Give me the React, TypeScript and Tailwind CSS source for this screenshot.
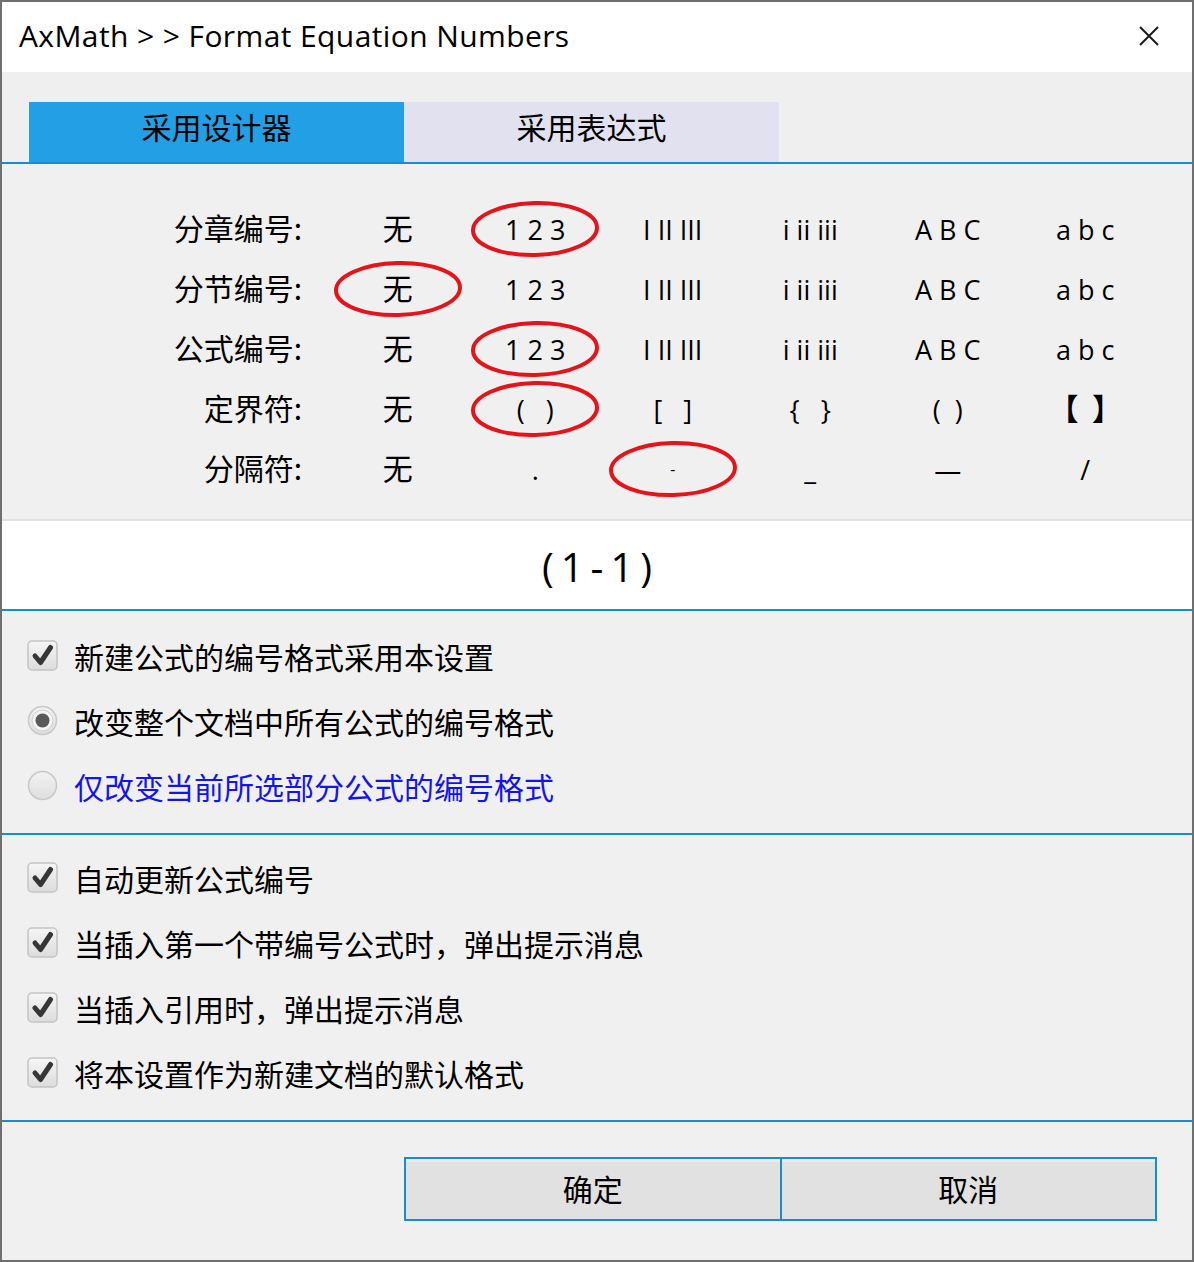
import React from "react";

const latin = "font-['Open_Sans','Noto_Sans_CJK_SC',sans-serif]";
const cjk = "font-['Noto_Sans_CJK_SC','Open_Sans',sans-serif]";

interface Row {
  label: string;
  items: string[];
  sel: number;
}

const rows: Row[] = [
  { label: "分章编号:", items: ["无", "1 2 3", "I II III", "i ii iii", "A B C", "a b c"], sel: 1 },
  { label: "分节编号:", items: ["无", "1 2 3", "I II III", "i ii iii", "A B C", "a b c"], sel: 0 },
  { label: "公式编号:", items: ["无", "1 2 3", "I II III", "i ii iii", "A B C", "a b c"], sel: 1 },
  { label: "定界符:", items: ["无", "(\u00a0\u00a0\u00a0)", "[\u00a0\u00a0\u00a0]", "{\u00a0\u00a0\u00a0}", "(\u00a0\u00a0)", "【\u00a0\u00a0】"], sel: 1 },
  { label: "分隔符:", items: ["无", ".", "-", "_", "—", "/"], sel: 2 },
];

function RedCircle() {
  return (
    <svg
      className="absolute left-1/2 top-1/2 -translate-x-1/2 -translate-y-1/2 pointer-events-none"
      width="134"
      height="60"
      viewBox="0 0 134 60"
    >
      <ellipse
        cx="67"
        cy="30"
        rx="62"
        ry="26"
        fill="none"
        stroke="#e5141b"
        strokeWidth="4"
        transform="rotate(-1.5 67 30)"
      />
    </svg>
  );
}

function Cell({ text, selected }: { text: string; selected: boolean }) {
  const isBracket = text.startsWith("【");
  const isCjk = text === "无" || isBracket;
  const small = text === "-";
  return (
    <div className="relative flex h-[60px] items-center justify-center">
      <span
        className={`${isCjk ? cjk + " pb-[4px] text-[30px]" : latin + (small ? " text-[16px]" : " text-[27px]")} ${isBracket ? "font-bold" : ""} whitespace-pre text-black leading-none`}
      >
        {text}
      </span>
      {selected && <RedCircle />}
    </div>
  );
}

function CheckBox() {
  return (
    <svg width="31" height="31" viewBox="0 0 31 31" className="shrink-0">
      <defs>
        <linearGradient id="cbg" x1="0" y1="0" x2="0" y2="1">
          <stop offset="0" stopColor="#f6f6f6" />
          <stop offset="1" stopColor="#dcdcdc" />
        </linearGradient>
      </defs>
      <rect x="1" y="1" width="29" height="29" rx="4" fill="url(#cbg)" stroke="#c4c4c4" strokeWidth="1.5" />
      <path d="M8 16 L13.5 22.5 L23.5 7.5" fill="none" stroke="#363636" strokeWidth="5" strokeLinecap="round" strokeLinejoin="round" />
    </svg>
  );
}

function Radio({ checked }: { checked: boolean }) {
  return (
    <svg width="31" height="31" viewBox="0 0 31 31" className="shrink-0">
      <defs>
        <linearGradient id="rbg" x1="0" y1="0" x2="0" y2="1">
          <stop offset="0" stopColor="#f2f2f2" />
          <stop offset="1" stopColor="#dedede" />
        </linearGradient>
      </defs>
      <circle cx="15.5" cy="15.5" r="14" fill="url(#rbg)" stroke="#c8c8c8" strokeWidth="1.5" />
      {checked && (
        <>
          <circle cx="15.5" cy="15.5" r="10.5" fill="#f4f4f4" stroke="#cfcfcf" strokeWidth="1" />
          <circle cx="15.5" cy="15.5" r="7" fill="#5a5a5a" />
        </>
      )}
    </svg>
  );
}

function Option({ control, text, blue }: { control: React.ReactNode; text: string; blue?: boolean }) {
  return (
    <div className="flex h-[65px] items-center gap-[16px] pl-[25px]">
      {control}
      <span className={`${cjk} text-[30px] leading-none ${blue ? "text-[#1414ee]" : "text-black"}`}>{text}</span>
    </div>
  );
}

export default function App() {
  return (
    <div className="flex h-[1262px] w-[1194px] flex-col border-2 border-[#6f6f6f] bg-[#f0f0f0]">
      {/* Title bar */}
      <div className="flex h-[70px] shrink-0 items-center justify-between bg-white pb-[3px] pl-[17px] pr-[32px]">
        <span className={`${latin} text-[30px] tracking-[0.4px] text-black`}>AxMath &gt; &gt; Format Equation Numbers</span>
        <svg width="22" height="22" viewBox="0 0 22 22">
          <path d="M2 2 L20 20 M20 2 L2 20" stroke="#1a1a1a" strokeWidth="2" />
        </svg>
      </div>

      {/* Tabs */}
      <div className="flex shrink-0 bg-[#efefef] pl-[27px] pt-[30px] border-b-2 border-[#1a8ccc]">
        <div className={`${cjk} flex h-[60px] w-[375px] items-center justify-center bg-[#239fe6] pb-[12px] text-[30px] text-black`}>
          采用设计器
        </div>
        <div className={`${cjk} flex h-[60px] w-[375px] items-center justify-center bg-[#e1e1ef] pb-[12px] text-[30px] text-black`}>
          采用表达式
        </div>
      </div>

      {/* Grid */}
      <div className="shrink-0 border-b-2 border-[#e2e2e2] pb-[20px] pt-[35px]">
        {rows.map((r) => (
          <div key={r.label} className="grid grid-cols-[327px_repeat(6,137.5px)]">
            <div className={`${cjk} flex h-[60px] items-center justify-end pb-[4px] pr-[27px] text-[30px] text-black`}>
              {r.label}
            </div>
            {r.items.map((it, i) => (
              <Cell key={i} text={it} selected={i === r.sel} />
            ))}
          </div>
        ))}
      </div>

      {/* Preview */}
      <div className="flex h-[90px] shrink-0 items-center justify-center border-b-2 border-[#1a8ccc] bg-white pt-[3px]">
        <span className={`${latin} pl-[7px] text-[40px] tracking-[7px] text-black`}>(1-1)</span>
      </div>

      {/* Scope */}
      <div className="shrink-0 border-b-2 border-[#1a8ccc] pb-[15px] pt-[12px]">
        <Option control={<CheckBox />} text="新建公式的编号格式采用本设置" />
        <Option control={<Radio checked />} text="改变整个文档中所有公式的编号格式" />
        <Option control={<Radio checked={false} />} text="仅改变当前所选部分公式的编号格式" blue />
      </div>

      {/* Misc */}
      <div className="shrink-0 border-b-2 border-[#1a8ccc] pb-[15px] pt-[10px]">
        <Option control={<CheckBox />} text="自动更新公式编号" />
        <Option control={<CheckBox />} text="当插入第一个带编号公式时，弹出提示消息" />
        <Option control={<CheckBox />} text="当插入引用时，弹出提示消息" />
        <Option control={<CheckBox />} text="将本设置作为新建文档的默认格式" />
      </div>

      {/* Buttons */}
      <div className="flex flex-1 justify-end pr-[35px] pt-[35px]">
        <div className="flex h-[64px] w-[753px] border-2 border-[#1a8ccc]">
          <button className={`${cjk} flex-1 border-t-[3px] border-[#ebebeb] bg-[#e1e1e1] pb-[4px] text-[30px] text-black`}>
            确定
          </button>
          <div className="w-[2px] bg-[#1a8ccc]" />
          <button className={`${cjk} flex-1 border-t-[3px] border-[#ebebeb] bg-[#e1e1e1] pb-[4px] text-[30px] text-black`}>
            取消
          </button>
        </div>
      </div>
    </div>
  );
}
